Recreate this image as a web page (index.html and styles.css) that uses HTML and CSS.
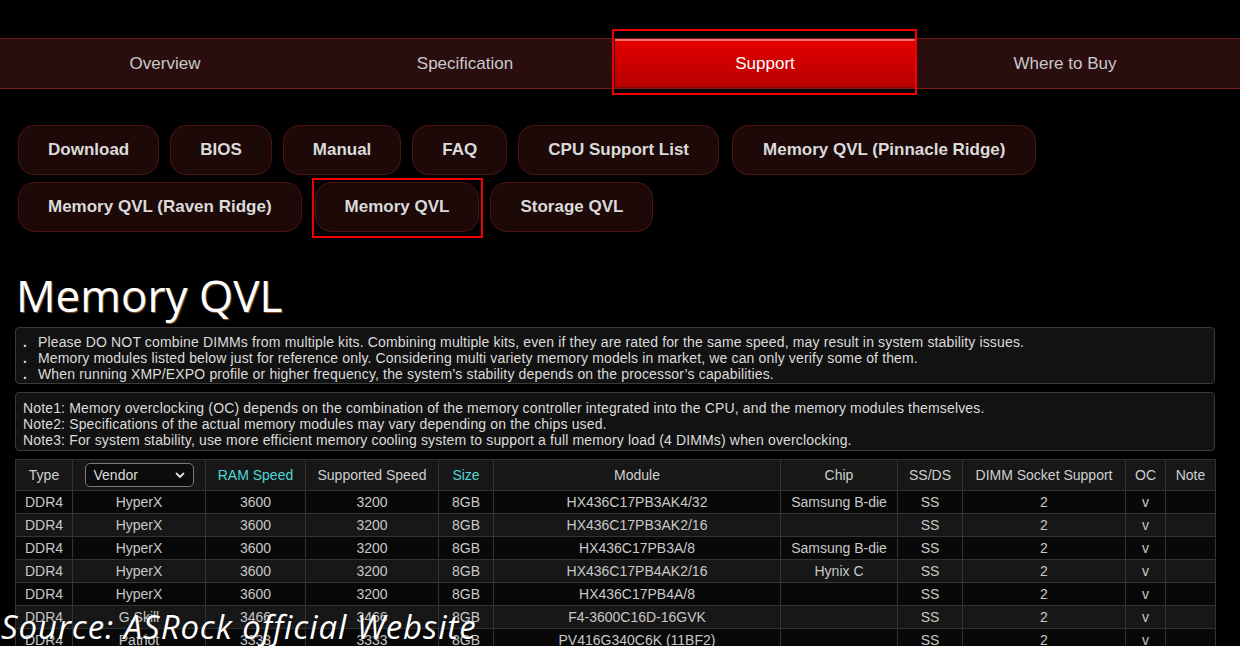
FILE: index.html
```html
<!DOCTYPE html>
<html lang="en">
<head>
<meta charset="utf-8">
<title>Memory QVL</title>
<link rel="stylesheet" href="styles.css">
</head>
<body>
<div class="page">
  <nav class="tabs">
    <div class="tabs-inner">
      <a class="tab">Overview</a>
      <a class="tab">Specification</a>
      <a class="tab active">Support</a>
      <a class="tab">Where to Buy</a>
    </div>
  </nav>

  <div class="subnav">
    <a class="btn">Download</a>
    <a class="btn">BIOS</a>
    <a class="btn">Manual</a>
    <a class="btn">FAQ</a>
    <a class="btn">CPU Support List</a>
    <a class="btn wide">Memory QVL (Pinnacle Ridge)</a>
    <a class="btn">Memory QVL (Raven Ridge)</a>
    <a class="btn marked">Memory QVL</a>
    <a class="btn">Storage QVL</a>
  </div>

  <h1 class="title">Memory QVL</h1>

  <div class="info bullets">
    <p>Please DO NOT combine DIMMs from multiple kits. Combining multiple kits, even if they are rated for the same speed, may result in system stability issues.</p>
    <p>Memory modules listed below just for reference only. Considering multi variety memory models in market, we can only verify some of them.</p>
    <p>When running XMP/EXPO profile or higher frequency, the system’s stability depends on the processor’s capabilities.</p>
  </div>

  <div class="info notes">
    <p>Note1: Memory overclocking (OC) depends on the combination of the memory controller integrated into the CPU, and the memory modules themselves.</p>
    <p>Note2: Specifications of the actual memory modules may vary depending on the chips used.</p>
    <p>Note3: For system stability, use more efficient memory cooling system to support a full memory load (4 DIMMs) when overclocking.</p>
  </div>

  <table class="qvl">
    <colgroup>
      <col class="c-type"><col class="c-vendor"><col class="c-ram"><col class="c-sup"><col class="c-size"><col class="c-module"><col class="c-chip"><col class="c-ss"><col class="c-dimm"><col class="c-oc"><col class="c-note">
    </colgroup>
    <thead>
      <tr>
        <th>Type</th>
        <th><span class="select"><span>Vendor</span><svg class="chev" width="10" height="7" viewBox="0 0 10 7"><path d="M1.5 1.5 L5 5 L8.5 1.5" fill="none" stroke="#ddd" stroke-width="1.8" stroke-linecap="round" stroke-linejoin="round"/></svg></span></th>
        <th class="hl">RAM Speed</th>
        <th>Supported Speed</th>
        <th class="hl">Size</th>
        <th>Module</th>
        <th>Chip</th>
        <th>SS/DS</th>
        <th>DIMM Socket Support</th>
        <th>OC</th>
        <th>Note</th>
      </tr>
    </thead>
    <tbody>
      <tr><td>DDR4</td><td>HyperX</td><td>3600</td><td>3200</td><td>8GB</td><td>HX436C17PB3AK4/32</td><td>Samsung B-die</td><td>SS</td><td>2</td><td>v</td><td></td></tr>
      <tr><td>DDR4</td><td>HyperX</td><td>3600</td><td>3200</td><td>8GB</td><td>HX436C17PB3AK2/16</td><td></td><td>SS</td><td>2</td><td>v</td><td></td></tr>
      <tr><td>DDR4</td><td>HyperX</td><td>3600</td><td>3200</td><td>8GB</td><td>HX436C17PB3A/8</td><td>Samsung B-die</td><td>SS</td><td>2</td><td>v</td><td></td></tr>
      <tr><td>DDR4</td><td>HyperX</td><td>3600</td><td>3200</td><td>8GB</td><td>HX436C17PB4AK2/16</td><td>Hynix C</td><td>SS</td><td>2</td><td>v</td><td></td></tr>
      <tr><td>DDR4</td><td>HyperX</td><td>3600</td><td>3200</td><td>8GB</td><td>HX436C17PB4A/8</td><td></td><td>SS</td><td>2</td><td>v</td><td></td></tr>
      <tr><td>DDR4</td><td>G.Skill</td><td>3466</td><td>3466</td><td>8GB</td><td>F4-3600C16D-16GVK</td><td></td><td>SS</td><td>2</td><td>v</td><td></td></tr>
      <tr><td>DDR4</td><td>Patriot</td><td>3333</td><td>3333</td><td>8GB</td><td>PV416G340C6K (11BF2)</td><td></td><td>SS</td><td>2</td><td>v</td><td></td></tr>
    </tbody>
  </table>
</div>
<div class="watermark">Source: ASRock official Website</div>
</body>
</html>
```

FILE: styles.css
```css
* { box-sizing: border-box; }

html, body {
  margin: 0;
  padding: 0;
  background: #000;
}

body {
  font-family: "Liberation Sans", Arial, sans-serif;
  color: #d0d0d0;
  height: 646px;
  overflow: hidden;
  position: relative;
}

.page {
  padding-top: 38px;
}

/* top tabs */
.tabs {
  background: #2a0e0f;
  border-top: 1px solid #6e1717;
  border-bottom: 1px solid #7c1a1a;
}

.tabs-inner {
  display: flex;
  padding-left: 15px;
  height: 49px;
}

.tab {
  width: 300px;
  display: flex;
  align-items: center;
  justify-content: center;
  font-size: 17px;
  color: #c9c9c9;
}

.tab.active {
  position: relative;
  color: #fff;
  background: linear-gradient(#e60000, #b60000);
  box-shadow: inset 0 2px 0 rgba(255, 150, 150, 0.75), inset 0 -1px 0 #8a0000;
}

.tab.active::after {
  content: "";
  position: absolute;
  left: -3px;
  right: -2px;
  top: -10px;
  bottom: -7px;
  border: 2px solid #f00000;
}

/* sub navigation */
.subnav {
  display: flex;
  flex-wrap: wrap;
  gap: 7px 11px;
  padding: 36px 0 0 18px;
}

.btn {
  height: 50px;
  padding: 0 29px;
  display: flex;
  align-items: center;
  font-size: 17px;
  font-weight: bold;
  color: #dadada;
  background: #1e0909;
  border: 1px solid #4c1313;
  border-radius: 16px;
}

.btn.wide {
  margin-left: 2px;
  padding: 0 30px;
}

.btn.marked {
  position: relative;
  margin-left: 2px;
}

.btn.marked::after {
  content: "";
  position: absolute;
  left: -4px;
  right: -5px;
  top: -5px;
  bottom: -7px;
  border: 2px solid #f00000;
}

/* title */
.title {
  margin: 36px 0 5px 16px;
  font-family: "Open Sans", "Liberation Sans", sans-serif;
  font-weight: 400;
  font-size: 44px;
  line-height: 54px;
  color: #fff;
  text-shadow: 1px 1px 1px rgba(190, 120, 60, 0.7);
}

/* info boxes */
.info {
  width: 1200px;
  margin: 0 0 8px 15px;
  background: #121212;
  border: 1px solid #3a3a3a;
  border-radius: 4px;
  padding: 6px 6px 1px;
  font-size: 14px;
  line-height: 16px;
  letter-spacing: 0.15px;
  color: #dcdcdc;
}

.info p {
  margin: 0;
  white-space: nowrap;
}

.bullets p::before {
  content: ".";
  display: inline-block;
  width: 15px;
  font-weight: bold;
  padding-left: 1px;
}

.notes {
  padding: 7px 7px 2px;
  margin-bottom: 8px;
}

/* table */
.qvl {
  margin-left: 15px;
  width: 1200px;
  border-collapse: collapse;
  table-layout: fixed;
  font-size: 14px;
  color: #c8c8c8;
}

.c-type { width: 57px; }
.c-vendor { width: 133px; }
.c-ram { width: 100px; }
.c-sup { width: 133px; }
.c-size { width: 55px; }
.c-module { width: 287px; }
.c-chip { width: 117px; }
.c-ss { width: 65px; }
.c-dimm { width: 163px; }
.c-oc { width: 40px; }
.c-note { width: 50px; }

.qvl th,
.qvl td {
  border: 1px solid #333;
  text-align: center;
  padding: 0;
  white-space: nowrap;
}

.qvl th {
  height: 31px;
  font-weight: normal;
  background: #171717;
  color: #cfcfcf;
}

.qvl th.hl {
  color: #4fd8d8;
}

.qvl td {
  height: 23px;
}

.qvl tbody tr:nth-child(odd) td { background: #080808; }
.qvl tbody tr:nth-child(even) td { background: #171717; }

.select {
  display: flex;
  align-items: center;
  justify-content: space-between;
  width: 109px;
  height: 24px;
  margin: 0 auto;
  padding: 0 8px 0 8px;
  border: 1px solid #7a7a7a;
  border-radius: 5px;
  background: #0c0c0c;
  color: #dcdcdc;
  text-align: left;
}

.chev { display: block; }

/* watermark */
.watermark {
  position: absolute;
  left: 1px;
  top: 607px;
  font-family: "Open Sans", "Noto Sans", sans-serif;
  font-style: italic;
  font-size: 33px;
  line-height: 40px;
  letter-spacing: 0.9px;
  color: #fff;
  text-shadow: 0 0 2px rgba(0, 0, 0, 0.6);
  white-space: nowrap;
}
```
